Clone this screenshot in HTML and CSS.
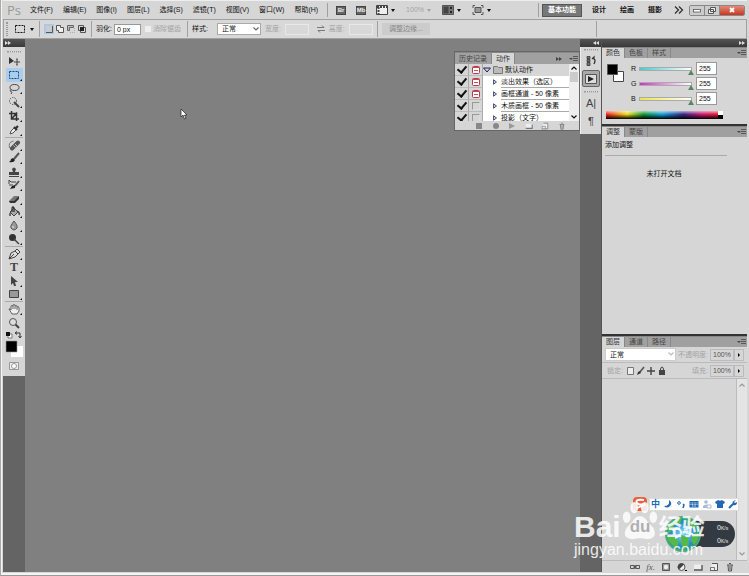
FILE: index.html
```html
<!DOCTYPE html>
<html lang="zh-CN">
<head>
<meta charset="utf-8">
<title>Ps</title>
<link rel="stylesheet" href="styles.css">
</head>
<body>
<svg class="defs" aria-hidden="true">
  <symbol id="down" viewBox="0 0 6 6"><path d="M1 2h4L3 5z" fill="currentColor"/></symbol>
  <symbol id="chev" viewBox="0 0 8 8"><path d="M1.500 2.500L4 5l2.500-2.500" fill="none" stroke="currentColor" stroke-width="1.200"/></symbol>
  <symbol id="ff" viewBox="0 0 8 6"><path d="M1 1l3 2-3 2zM4 1l3 2-3 2z" fill="currentColor"/></symbol>
  <symbol id="pmenu" viewBox="0 0 10 8"><path d="M0 3h4L2 5z" fill="currentColor"/><path d="M4 1.500h5M4 3.500h5M4 5.500h5" stroke="currentColor" stroke-width=".8"/></symbol>
  <symbol id="trash" viewBox="0 0 10 10"><path d="M2 3h6M4 1.500h2M3 3l.5 6h3L7 3M5 4v4" fill="none" stroke="currentColor"/></symbol>
  <symbol id="newdoc" viewBox="0 0 10 10"><path d="M3 1.500h5.500v7H1" fill="#eee" stroke="currentColor"/><path d="M1.500 5.500h4v3h-4z" fill="#eee" stroke="currentColor" stroke-width=".8"/></symbol>
  <symbol id="folder" viewBox="0 0 10 10"><path d="M1 2.500h8v5H1z" fill="#eee"/><path d="M1 8h8V3" fill="none" stroke="currentColor" stroke-width="1.400"/></symbol>
  <symbol id="red" viewBox="0 0 10 10"><rect x="1.500" y="1.500" width="7" height="7" rx="1" fill="#fff" stroke="#b63c48"/><path d="M2 2.500h6M3 5.500h4" stroke="#c64b57"/></symbol>
  <symbol id="marquee" viewBox="0 0 12 12"><rect x="1.500" y="2.500" width="9" height="7" fill="none" stroke="currentColor" stroke-dasharray="2 1"/></symbol>
</svg>

<div class="app">
  <header class="menubar">
    <span class="logo">Ps</span>
    <nav class="menus">
      <button>文件(F)</button><button>编辑(E)</button><button>图像(I)</button><button>图层(L)</button><button>选择(S)</button><button>滤镜(T)</button><button>视图(V)</button><button>窗口(W)</button><button>帮助(H)</button>
    </nav>
    <i class="rule"></i>
    <div class="apps">
      <button class="chip" aria-label="Bridge">Br</button>
      <button class="chip" aria-label="Mini Bridge">Mb</button>
      <button aria-label="查看额外内容"><svg class="i12" viewBox="0 0 12 12"><path d="M.5 1.500h11v9H.5z" fill="#eee" stroke="#444"/><path d="M1 3h10M2.500 3v7" stroke="#444" stroke-width="2" stroke-dasharray="2 1"/></svg><svg class="i6"><use href="#down"/></svg></button>
      <button class="dim">100%<svg class="i6"><use href="#down"/></svg></button>
      <button aria-label="排列文档"><svg class="i12" viewBox="0 0 12 12"><path d="M.5 1.500h11v9H.5z" fill="#777" stroke="#555"/><path d="M1.500 2.500h5v7h-5z" fill="#444"/><path d="M8 3h2v2H8zM8 7h2v2H8z" fill="#222"/></svg><svg class="i6"><use href="#down"/></svg></button>
      <button aria-label="屏幕模式"><svg class="i12" viewBox="0 0 12 12"><path d="M3 3.500h6v5H3z" fill="#999" stroke="#555"/><path d="M1 4V1.500h2M9 1.500h2V4M1 8v2.500h2M9 10.500h2V8" fill="none" stroke="#555"/></svg><svg class="i6"><use href="#down"/></svg></button>
    </div>
    <div class="modes">
      <i class="rule"></i>
      <button class="on">基本功能</button><button>设计</button><button>绘画</button><button>摄影</button>
      <button class="more" aria-label="更多"><svg class="i10" viewBox="0 0 10 10"><path d="M1 1.500L4.500 5 1 8.500M5 1.500L8.500 5 5 8.500" fill="none" stroke="#333" stroke-width="1.300"/></svg></button>
    </div>
    <div class="win">
      <button aria-label="最小化"><svg class="i10" viewBox="0 0 10 10"><rect x="1.500" y="4.500" width="7" height="2.500" fill="#fff" stroke="#555" stroke-width=".8"/></svg></button>
      <button aria-label="还原"><svg class="i10" viewBox="0 0 10 10"><path d="M3.500 2.500h5v4h-5zM1.500 4.500h5v4h-5z" fill="#eee" stroke="#555"/></svg></button>
      <button class="close" aria-label="关闭"><svg class="i10" viewBox="0 0 10 10"><path d="M3 3l4 4M7 3L3 7" stroke="#fff" stroke-width="1.800"/></svg></button>
    </div>
  </header>

  <div class="options">
    <i class="grip"></i>
    <button class="preset" aria-label="选框工具"><svg class="i12"><use href="#marquee"/></svg><svg class="i6"><use href="#down"/></svg></button>
    <i class="rule"></i>
    <div class="bools">
      <button class="sel" aria-label="新选区"><svg class="i10" viewBox="0 0 10 10"><path d="M2 2h6v6H2z" fill="#ccc"/><path d="M2 8.500h6.500V2" fill="none" stroke="#555"/></svg></button>
      <button aria-label="添加到选区"><svg class="i10" viewBox="0 0 10 10"><path d="M1.500 1.500h4v2h3v5h-5v-2h-2z" fill="#eee" stroke="#555"/></svg></button>
      <button aria-label="从选区减去"><svg class="i10" viewBox="0 0 10 10"><path d="M1.500 6.500v-5h6v2h-4v3z" fill="#bbb" stroke="#666"/><path d="M4 8.500h4.500V4" fill="none" stroke="#aaa" stroke-dasharray="1 1"/></svg></button>
      <button aria-label="与选区交叉"><svg class="i10" viewBox="0 0 10 10"><path d="M1.500 1.500h5v5h-5zM3.500 3.500h5v5h-5z" fill="none" stroke="#555"/><path d="M3 3h4v4H3z" fill="#222"/></svg></button>
    </div>
    <i class="rule"></i>
    <label for="feather">羽化:</label><input id="feather" class="num" value="0 px">
    <label class="tick dim"><input type="checkbox" disabled>消除锯齿</label>
    <i class="rule"></i>
    <label for="style">样式:</label>
    <span class="pick wide"><select id="style"><option>正常</option></select><svg class="i8"><use href="#chev"/></svg></span>
    <label class="dim" for="w">宽度:</label><input id="w" class="num off" disabled>
    <button class="swap" aria-label="互换"><svg class="i8" viewBox="0 0 8 8"><path d="M0 2.500h7M5 .5l2 2M8 5.500H1M3 7.500l-2-2" fill="none" stroke="#777"/></svg></button>
    <label class="dim" for="h">高度:</label><input id="h" class="num off" disabled>
    <i class="rule"></i>
    <button class="refine" disabled>调整边缘...</button>
    <i class="rule last"></i>
  </div>

  <main class="work">
    <aside class="tools">
      <div class="bar"><svg class="i8"><use href="#ff"/></svg></div>
      <div class="toolbox">
        <i class="handle"></i>
        <div class="grp g6">
          <button aria-label="移动"><svg viewBox="0 0 12 12"><path d="M1 2l5 4-5 3z" fill="#333"/><path d="M9 4v6M6 7h6" stroke="#444"/><path d="M9 3l1 1.500H8zM9 11l1-1.500H8z" fill="#444"/></svg></button>
          <button class="cur more-t" aria-label="矩形选框"><svg><use href="#marquee"/></svg></button>
          <button class="more-t" aria-label="套索"><svg viewBox="0 0 12 12"><ellipse cx="6.500" cy="4.500" rx="4.500" ry="3" fill="none" stroke="#444"/><path d="M3 6.500Q1 8 3 8.500t0 2.500" fill="none" stroke="#444"/></svg></button>
          <button class="more-t" aria-label="快速选择"><svg viewBox="0 0 12 12"><circle cx="5" cy="5" r="3.500" fill="none" stroke="#555" stroke-dasharray="1.500 1"/><path d="M6 6l5 5" stroke="#444" stroke-width="2"/></svg></button>
          <button class="more-t" aria-label="裁剪"><svg viewBox="0 0 12 12"><path d="M3.500 1v8H11M1 3.500h7.500V11M4 8.500l5-6" fill="none" stroke="#333" stroke-width="1.500"/></svg></button>
          <button class="more-t" aria-label="吸管"><svg viewBox="0 0 12 12"><path d="M2 10l1-3 3-3 2 2-3 3z" fill="#eee" stroke="#555"/><path d="M6 3l3 3M7 5l3-3" stroke="#333" stroke-width="2.200"/></svg></button>
        </div>
        <div class="grp g8">
          <button class="more-t" aria-label="修复画笔"><svg viewBox="0 0 12 12"><path d="M4 9.500L10 3.500" stroke="#555" stroke-width="4" stroke-linecap="round"/><path d="M5.500 6.500l2 2M7 5l2 2" stroke="#ddd" stroke-width=".8"/><path d="M1.500 9q-1.500-6 4-7" fill="none" stroke="#777"/></svg></button>
          <button class="more-t" aria-label="画笔"><svg viewBox="0 0 12 12"><path d="M11 1L6 7" stroke="#555" stroke-width="2"/><path d="M1 10q2-1 2-3l2-1 2 2q-1 3-6 2" fill="#222"/></svg></button>
          <button class="more-t" aria-label="图章"><svg viewBox="0 0 12 12"><path d="M4 3q2-3 4 0L7 6h4v3H1V6h4zM1 10h10v1H1z" fill="#444"/></svg></button>
          <button class="more-t" aria-label="历史画笔"><svg viewBox="0 0 12 12"><path d="M11 2L7 7" stroke="#555" stroke-width="2"/><path d="M2 10l2-3 3-1v3z" fill="#222"/><path d="M1 5V1l2 2h5M1 6h4" fill="none" stroke="#444"/></svg></button>
          <button class="more-t" aria-label="橡皮擦"><svg viewBox="0 0 12 12"><path d="M1 8l5-5h5L7 9H2z" fill="#777"/><path d="M1 8h5l5-5v3L7 10H2z" fill="#333"/></svg></button>
          <button class="more-t" aria-label="油漆桶"><svg viewBox="0 0 12 12"><path d="M2 6l4-4 4 4-4 4z" fill="#aaa" stroke="#444"/><path d="M4 6V2q1-2 2 0v4M2 7v3M9 5q3 1 2 4" fill="none" stroke="#333" stroke-width="1.300"/></svg></button>
          <button class="more-t" aria-label="模糊"><svg viewBox="0 0 12 12"><path d="M6 1Q2 6 3 8q3 4 6 0 1-2-3-7" fill="#999" stroke="#555"/><path d="M5 6v2" stroke="#eee"/></svg></button>
          <button class="more-t" aria-label="减淡"><svg viewBox="0 0 12 12"><circle cx="4.500" cy="4.500" r="3.500" fill="#333"/><path d="M6 6l5 5" stroke="#444" stroke-width="1.500"/></svg></button>
        </div>
        <div class="grp g4">
          <button class="more-t" aria-label="钢笔"><svg viewBox="0 0 12 12"><path d="M1 11l2-6 4-2 3 3-3 3zM7 3l2-2 3 3-2 2M1 11l5-5" fill="#ddd" stroke="#444"/></svg></button>
          <button class="more-t letter">T</button>
          <button class="more-t" aria-label="路径选择"><svg viewBox="0 0 12 12"><path d="M3 1l7 6H7l1 4H6L5 8l-2 2z" fill="#444"/></svg></button>
          <button class="more-t" aria-label="矩形"><svg viewBox="0 0 12 12"><path d="M1.500 2.500h9v7h-9z" fill="#999" stroke="#444"/></svg></button>
        </div>
        <div class="grp g2">
          <button class="more-t" aria-label="抓手"><svg viewBox="0 0 12 12"><path d="M4 11L1 6q1-1 2 1V3q1-1 2 0V2q1-1 2 0v1q1-1 2 0v1q2-1 2 1v3l-2 3zM5 3v3M7 3v3M9 4v3" fill="#eee" stroke="#555" stroke-width=".9"/></svg></button>
          <button aria-label="缩放"><svg viewBox="0 0 12 12"><circle cx="5" cy="5" r="3.500" fill="#ddd" stroke="#555"/><path d="M7.500 7.500L11 11" stroke="#444" stroke-width="2"/></svg></button>
        </div>
        <svg class="inks" viewBox="0 0 18 46"><path d="M3 4h4v4H3z" fill="#fff" stroke="#777"/><path d="M1 2h4v4H1z" fill="#111"/><path d="M11 3h4v4M12 1.500L10 3l2 1.500M13.500 6L15 8l1.500-2" fill="none" stroke="#333"/><path d="M6 16h12v11H6z" fill="#fff"/><path d="M1 11h11v11H1z" fill="#000" stroke="#999" stroke-width=".6"/><path d="M4.500 32.500h9v7h-9z" fill="#eee" stroke="#999"/><circle cx="9" cy="36" r="2.500" fill="#fff" stroke="#999"/></svg>
      </div>
    </aside>

    <section class="canvas"></section>

    <aside class="strip">
      <div class="bar right"><svg class="i8 flip"><use href="#ff"/></svg></div>
      <div class="stripbox">
        <i class="handle"></i>
        <button aria-label="历史记录"><svg class="i12" viewBox="0 0 12 12"><path d="M2 1.500h3v2H2zM2 4.500h3v2H2zM2 7.500h3v3H2z" fill="#777" stroke="#333" stroke-width=".8"/><path d="M7 4l2-2v2q2 1 0 5" fill="none" stroke="#333" stroke-width="1.300"/></svg></button>
        <button class="down" aria-label="动作"><svg class="i12" viewBox="0 0 12 12"><path d="M.5 1.500h11v9H.5z" fill="#ddd" stroke="#555"/><path d="M3 3l6 3-6 3z" fill="#222"/></svg></button>
        <i class="handle"></i>
        <button class="glyph">A|</button>
        <button class="glyph">¶</button>
      </div>
    </aside>

    <aside class="panels">
      <div class="bar both"><span></span><svg class="i8"><use href="#ff"/></svg></div>
      <section class="panel">
        <div class="tabs"><button class="act">颜色</button><button>色板</button><button>样式</button><svg class="i10 pm"><use href="#pmenu"/></svg></div>
        <div class="color">
          <svg class="fgbg" viewBox="0 0 20 20"><path d="M7.500 8.500h10v10h-10z" fill="#fff" stroke="#444"/><path d="M1.500 1.500h10v10h-10z" fill="#000" stroke="#555"/></svg>
          <div class="chans">
            <label for="r">R</label><span class="ramp cyan"><i></i></span><input id="r" value="255">
            <label for="g">G</label><span class="ramp mag"><i></i></span><input id="g" value="255">
            <label for="b">B</label><span class="ramp yel"><i></i></span><input id="b" value="255">
          </div>
          <div class="spectrum"><span></span><i></i></div>
        </div>
      </section>
      <section class="panel">
        <div class="tabs"><button class="act">调整</button><button>蒙版</button><svg class="i10 pm"><use href="#pmenu"/></svg></div>
        <div class="adjust"><h2>添加调整</h2><p>未打开文档</p></div>
      </section>
      <section class="panel grow">
        <div class="tabs"><button class="act">图层</button><button>通道</button><button>路径</button><svg class="i10 pm"><use href="#pmenu"/></svg></div>
        <div class="lrow">
          <span class="pick blend"><select aria-label="混合模式"><option>正常</option></select><svg class="i8"><use href="#chev"/></svg></span>
          <label class="dim push" for="op">不透明度:</label><input id="op" class="pct" value="100%"><button class="step" aria-label="不透明度滑块"><svg class="i6" viewBox="0 0 6 6"><path d="M2 1l2 2-2 2z"/></svg></button>
        </div>
        <div class="lrow">
          <span class="dim">锁定:</span>
          <svg class="locks" viewBox="0 0 42 10"><path d="M1.500 1.500h6v7h-6z" fill="#eee" stroke="#777"/><path d="M18 1l-4 5" stroke="#555" stroke-width="1.600"/><path d="M11 9l1-3 2-1 1 2z" fill="#333"/><path d="M25 1v8M21 5h8" stroke="#444" stroke-width="1.400"/><path d="M33 4h6v5h-6z" fill="#444"/><path d="M34.500 4q0-3 1.500-3t1.500 3" fill="none" stroke="#444"/></svg>
          <label class="dim push" for="fill">填充:</label><input id="fill" class="pct" value="100%"><button class="step" aria-label="填充滑块"><svg class="i6" viewBox="0 0 6 6"><path d="M2 1l2 2-2 2z"/></svg></button>
        </div>
        <div class="layers"><div class="scroll"><svg class="i8 up"><use href="#chev"/></svg><svg class="i8"><use href="#chev"/></svg></div></div>
        <div class="lfoot">
          <svg class="i10" viewBox="0 0 10 10"><path d="M.5 3.500h4v3h-4zM5.500 3.500h4v3h-4zM3 5h4" fill="none" stroke="#555"/></svg>
          <em>fx.</em>
          <svg class="i10" viewBox="0 0 10 10"><path d="M1.500 1.500h7v7h-7z" fill="#999" stroke="#555"/><circle cx="5" cy="5" r="2.200" fill="#eee"/></svg>
          <svg class="i10" viewBox="0 0 10 10"><circle cx="4.500" cy="5" r="3.500" fill="#eee" stroke="#555"/><path d="M2 7.500L7 2.500A3.500 3.500 0 0 0 2 7.500" fill="#444"/><path d="M8 8h2v1H8z"/></svg>
          <svg class="i10"><use href="#folder"/></svg>
          <svg class="i10"><use href="#newdoc"/></svg>
          <svg class="i10"><use href="#trash"/></svg>
        </div>
      </section>
    </aside>
  </main>
</div>

<section class="actions">
  <div class="tabs"><button>历史记录</button><button class="act">动作</button><svg class="i8 pm"><use href="#ff"/></svg><svg class="i10 am"><use href="#pmenu"/></svg></div>
  <div class="abody">
    <ul>
      <li class="set"><input type="checkbox" checked aria-label="默认动作"><span class="dlg"><svg class="i10"><use href="#red"/></svg></span><span class="nm"><svg class="i8" viewBox="0 0 8 8"><path d="M.5 2h7L4 6z" fill="#ccd" stroke="#225"/></svg><svg class="i10" viewBox="0 0 10 10"><path d="M.5 1.500h4l1 1h4v6h-9z" fill="#bbb" stroke="#777"/></svg>默认动作</span></li>
      <li><input type="checkbox" checked aria-label="淡出效果"><span class="dlg"><svg class="i10"><use href="#red"/></svg></span><span class="nm"><svg class="i6" viewBox="0 0 6 8"><path d="M1 1l4 3-4 3z" fill="#ccd" stroke="#225"/></svg><b>淡出效果（选区）</b></span></li>
      <li><input type="checkbox" checked aria-label="画框通道"><span class="dlg"><svg class="i10"><use href="#red"/></svg></span><span class="nm"><svg class="i6" viewBox="0 0 6 8"><path d="M1 1l4 3-4 3z" fill="#ccd" stroke="#225"/></svg><b>画框通道 - 50 像素</b></span></li>
      <li><input type="checkbox" checked aria-label="木质画框"><span class="dlg"><i></i></span><span class="nm"><svg class="i6" viewBox="0 0 6 8"><path d="M1 1l4 3-4 3z" fill="#ccd" stroke="#225"/></svg><b>木质画框 - 50 像素</b></span></li>
      <li><input type="checkbox" checked aria-label="投影"><span class="dlg"><i></i></span><span class="nm"><svg class="i6" viewBox="0 0 6 8"><path d="M1 1l4 3-4 3z" fill="#ccd" stroke="#225"/></svg><b>投影（文字）</b></span></li>
    </ul>
    <div class="scroll"><svg class="i8 up"><use href="#chev"/></svg><i></i><svg class="i8 end"><use href="#chev"/></svg></div>
  </div>
  <div class="afoot">
    <svg class="i8" viewBox="0 0 8 8"><path d="M1 1h6v6H1z" fill="#888"/></svg>
    <svg class="i8" viewBox="0 0 8 8"><circle cx="4" cy="4" r="3" fill="#888"/></svg>
    <svg class="i8" viewBox="0 0 8 8"><path d="M1 1l6 3-6 3z" fill="#999"/></svg>
    <svg class="i8"><use href="#folder"/></svg>
    <svg class="i8"><use href="#newdoc"/></svg>
    <svg class="i8"><use href="#trash"/></svg>
  </div>
</section>

<svg class="cursor" viewBox="0 0 8 12"><path d="M1 1v8l2-2 1.500 4 1.500-.6L4.500 7H7z" fill="#fff" stroke="#222" stroke-width=".7"/></svg>

<div class="net">
  <div class="pill"><span>0<small>K/s</small></span><span>0<small>K/s</small></span></div>
  <svg class="globe" viewBox="0 0 38 38"><defs><radialGradient id="gl"><stop offset="0" stop-color="#8bdcf5"/><stop offset=".7" stop-color="#278bd0"/><stop offset="1" stop-color="#2c9a84"/></radialGradient></defs><circle cx="19" cy="19" r="17" fill="url(#gl)" stroke="#48aa7b" stroke-width="2"/><path d="M5 10q7-8 13-7l-2 5-6 2-1 5-5 4zM20 4l8 2 5 6-5 1-4-3zM3 22l7-1 5 5-2 7q-8-4-10-11M17 20l7 2 1 8-5 5-3-6zM28 19l6-2q2 7-4 13l-3-4z" fill="#57b84a"/><path d="M9 16q3-5 7-1t-5 8M20 15l8-3M22 18l7 1" stroke="#d9f7ff" stroke-width="2" fill="none"/></svg>
</div>
<div class="ime">
  <svg class="sogou" viewBox="0 0 16 16"><rect x="1" y="1" width="14" height="14" rx="4" fill="#e9603c"/><path d="M12 4Q4 3 4.500 6T11 8.500 4 12" fill="none" stroke="#fff" stroke-width="2"/></svg>
  <div class="imebar">
    <span>中</span>
    <svg class="i10" viewBox="0 0 10 10"><path d="M6 1q4 3 1 6-3 3-6 0 6 0 5-6" fill="#2368b5"/></svg>
    <svg class="i10" viewBox="0 0 10 10"><circle cx="3" cy="4" r="1.300" fill="none" stroke="#2368b5"/><path d="M7 5l1 1-1 3" fill="none" stroke="#2368b5" stroke-width="1.500"/></svg>
    <svg class="i10" viewBox="0 0 10 10"><path d="M.5 2h9v6.500h-9z" fill="#2368b5"/><path d="M1.500 4h7M1.500 5.500h7M3 7h4" stroke="#fff" stroke-width=".8" stroke-dasharray="1 .6"/></svg>
    <svg class="i10" viewBox="0 0 10 10"><circle cx="4" cy="3" r="1.800" fill="#a9b9d8"/><path d="M1 9V7q3-3 6 0v2z" fill="#a9b9d8"/><path d="M5 6h4v3H5z" fill="#fff" stroke="#a9b9d8"/></svg>
    <svg class="i10" viewBox="0 0 10 10"><path d="M0 3l3-2q2 1 4 0l3 2-1 2-1-.5V9H2V4.500L1 5z" fill="#2368b5"/></svg>
    <svg class="i10" viewBox="0 0 10 10"><path d="M1 9l4-4" stroke="#2368b5" stroke-width="2"/><path d="M8 1L6 3l1 1 2-1q0 4-4 3-2-4 3-5" fill="#2368b5"/></svg>
  </div>
</div>
<div class="mark">
  <div class="mtop"><span>Bai</span><span class="paw"><svg viewBox="0 0 38 44"><ellipse cx="5" cy="18" rx="4" ry="6"/><ellipse cx="13" cy="8" rx="4" ry="6"/><ellipse cx="24" cy="8" rx="4" ry="6"/><ellipse cx="33" cy="18" rx="4" ry="6"/><path d="M19 17q5 0 8 6l6 6q5 11-6 12-8-2-16 0Q-1 40 5 29l6-6q3-6 8-6"/></svg><b>du</b></span><span class="jy">经验</span></div>
  <div class="url">jingyan.baidu.com</div>
</div>
</body>
</html>
```
FILE: styles.css
```css
* { box-sizing: border-box; }
body { margin: 0; font: 7px/10px "Liberation Sans", "Noto Sans CJK SC", sans-serif; color: #111; background: #d6d6d6; }
button, input, select { font: inherit; color: inherit; border: 0; padding: 0; margin: 0; background: none; border-radius: 0; }
button { display: flex; align-items: center; justify-content: center; white-space: nowrap; }
ul, h2, p { margin: 0; padding: 0; list-style: none; font-size: inherit; }
svg { display: block; flex: none; }
label { white-space: nowrap; }
.defs { position: absolute; width: 0; height: 0; }
.i6 { width: 6px; height: 6px; }
.i8 { width: 8px; height: 8px; }
.i10 { width: 10px; height: 10px; }
.i12 { width: 12px; height: 12px; }
.dim { color: #a4a4a4; }
.flip { transform: scaleX(-1); }
.up { transform: scaleY(-1); }
.rule { width: 1px; height: 14px; background: #a0a0a0; flex: none; }

.app { min-height: 100vh; display: flex; flex-direction: column; padding: 0 2px 3px; border-bottom: 1px solid #999; border-left: 1px solid #aaa; box-shadow: inset 1px -2px #f4f4f4; }
.menubar { height: 19px; display: flex; align-items: center; border-top: 1px solid #eee; }
.logo { font: 13px/16px "Open Sans", sans-serif; color: #999; width: 22px; padding-left: 4px; }
.menus { display: flex; margin-right: 4px; }
.menus button { padding: 0 5px; }
.apps { display: flex; align-items: center; gap: 10px; margin-left: 8px; }
.apps button { gap: 2px; }
.apps .chip { width: 10px; height: 9px; background: #666; color: #eee; font-weight: bold; font-size: 6px; border: 1px solid #444; }
.modes { display: flex; align-items: center; margin-left: auto; font-weight: bold; }
.modes button { padding: 0 7px; }
.modes .on { color: #fff; background: #777; border: 1px solid #555; height: 13px; padding: 0 5px; margin: 0 3px; }
.modes .more { padding: 0 5px; }
.win { display: flex; border: 1px solid #888; border-radius: 2px; height: 11px; overflow: hidden; margin-right: 2px; }
.win button { width: 15px; background: #ccc; border-right: 1px solid #888; }
.win .close { width: 24px; background: linear-gradient(#e38a78, #c53722); border: 0; }

.options { height: 20px; display: flex; align-items: center; gap: 4px; border: 1px solid #a0a0a0; background: #d8d8d8; padding-left: 2px; }
.grip { width: 2px; height: 14px; border-left: 1px dotted #999; border-right: 1px dotted #999; margin-right: 2px; }
.preset { gap: 3px; }
.options .rule { height: 16px; }
.bools { display: flex; gap: 1px; }
.bools .sel { background: #a9c9e6; }
.num { width: 27px; height: 11px; background: #fff; border: 1px solid #999; padding: 0 2px; margin-left: -2px; }
.off { width: 24px; background: #d8d8d8; border-color: #e8e8e8; margin: 0; }
.swap { padding-left: 4px; }
.tick { display: flex; align-items: center; gap: 2px; margin-right: 2px; }
.tick input { appearance: none; width: 6px; height: 6px; background: #eee; }
.pick { position: relative; display: block; color: #222; }
.pick select { appearance: none; width: 100%; height: 12px; background: #fff; border: 1px solid #aaa; padding: 0 4px; display: block; }
.pick svg { position: absolute; right: 1px; top: 2px; color: #666; }
.wide { width: 44px; margin-left: 5px; }
.refine { height: 12px; width: 48px; background: #ccc; color: #888; }
.options .last { margin-left: auto; margin-right: 149px; }

.work { flex: 1; display: flex; min-height: 0; background: #808080; }
.bar { height: 8px; background: linear-gradient(#555, #393939); color: #ddd; display: flex; align-items: center; padding: 0 1px; }
.bar.right { justify-content: flex-end; }
.bar.both { justify-content: space-between; }
.tools { width: 22px; background: #646464; }
.toolbox { background: #d6d6d6; padding: 3px 2px 0; }
.handle { display: block; height: 2px; margin: 1px 2px; border-top: 1px dotted #999; border-bottom: 1px dotted #bbb; }
.grp { display: grid; grid-auto-rows: 1fr; border-bottom: 1px solid #aaa; padding-left: 1px; }
.g6 { height: 84px; }
.g8 { height: 109px; }
.g4 { height: 55px; }
.g2 { height: 28px; border: 0; }
.grp button { position: relative; color: #333; padding-right: 1px; }
.grp svg { width: 12px; height: 12px; }
.grp .cur { background: #a9cdec; color: #247; }
.more-t::after { content: ""; position: absolute; right: 1px; bottom: 1px; border: 1px solid; border-color: transparent #111 #111 transparent; }
.grp .letter { font: bold 12px/12px "Liberation Serif", serif; color: #444; }
.inks { width: 18px; height: 46px; }
.canvas { flex: 1; }

.strip { width: 21px; background: #646464; }
.stripbox { background: #d6d6d6; padding: 1px 1px 4px; border-left: 1px solid #eee; }
.stripbox button { width: 18px; height: 17px; }
.stripbox .down { background: #aaa; border: 1px solid #666; border-radius: 2px; margin: 1px 0 4px; }
.stripbox .glyph { font-size: 11px; color: #444; height: 18px; }

.panels { width: 146px; display: flex; flex-direction: column; background: #d6d6d6; border-left: 1px solid #555; }
.panel { border-bottom: 2px solid #333; display: flex; flex-direction: column; }
.panel.grow { flex: 1; border: 0; }
.tabs { display: flex; height: 11px; background: #a0a0a0; border-top: 1px solid #888; align-items: stretch; flex: none; color: #444; }
.tabs button { padding: 0 4px; border-right: 1px solid #888; }
.tabs .act { background: #d6d6d6; color: #333; }
.pm { margin-left: auto; }
.color { display: grid; grid-template-columns: 20px 1fr; column-gap: 4px; row-gap: 4px; padding: 3px 4px 5px; height: 66px; }
.fgbg { width: 20px; height: 20px; margin-top: 2px; }
.chans { display: grid; grid-template-columns: 6px 1fr 21px; grid-auto-rows: 15px; align-items: center; padding-right: 26px; margin-left: 1px; }
.chans input { height: 13px; background: #fff; border: 1px solid #999; width: 21px; padding: 0 2px; }
.ramp { position: relative; height: 4px; border: 1px solid #aaa; margin: 0 4px 0 2px; }
.ramp i { position: absolute; right: -3px; top: 2px; border: 3px solid transparent; border-top: 0; border-bottom: 5px solid #598565; }
.cyan { background: linear-gradient(90deg, #44cccc, #fff); }
.mag { background: linear-gradient(90deg, #cc33cc, #fff); }
.yel { background: linear-gradient(90deg, #eee34a, #fff); }
.spectrum { grid-column: 1 / 3; display: flex; height: 8px; margin-right: 20px; background: linear-gradient(#ffffff99, transparent 40%, #000), linear-gradient(90deg, #e22, #f5e020 18%, #169a35 32%, #18a4dd 48%, #352b8a 66%, #d01b75 82%, #e22); }
.spectrum span { flex: 1; }
.spectrum i { width: 5px; background: linear-gradient(#fff 50%, #000 50%); }
.adjust { height: 197px; padding: 3px 20px 0 3px; }
.adjust h2 { font-weight: normal; padding-bottom: 5px; border-bottom: 1px solid #aaa; }
.adjust p { text-align: center; padding: 13px 4px 0 0; }
.lrow { display: flex; align-items: center; height: 16px; padding: 0 3px; border-bottom: 1px solid #bbb; flex: none; }
.blend { width: 71px; }
.lrow .pick select { border-color: #ccc; height: 13px; }
.lrow .pick svg { color: #bbb; }
.lrow .dim { margin: 0 2px; }
.lrow .push { margin-left: auto; }
.pct { width: 24px; height: 12px; border: 1px solid #bbb; padding: 0 2px; color: #555; }
.step { width: 10px; height: 12px; border: 1px solid #bbb; }
.locks { width: 42px; height: 10px; margin-left: 1px; }
.layers { flex: 1; display: flex; justify-content: flex-end; }
.layers .scroll { width: 11px; border-left: 1px solid #bbb; background: #e4e4e4; color: #999; display: flex; flex-direction: column; justify-content: space-between; padding: 2px 1px; }
.lfoot { height: 12px; display: flex; align-items: center; justify-content: flex-end; gap: 6px; padding-right: 12px; border-top: 1px solid #bbb; color: #555; }
.lfoot em { font: italic 9px/10px "Liberation Serif", serif; }

.actions { position: absolute; left: 454px; top: 51px; width: 126px; background: #d6d6d6; border: 1px solid #666; }
.actions .tabs { height: 12px; align-items: center; }
.actions .tabs button { height: 11px; }
.am { margin-left: 6px; }
.abody { display: flex; height: 57px; overflow: hidden; }
.abody ul { flex: 1; background: #fff; }
.abody li { display: flex; height: 12px; align-items: center; }
.abody li input { appearance: none; width: 14px; height: 12px; background: #d6d6d6; border-right: 1px solid #aaa; border-bottom: 1px solid #bbb; display: grid; place-items: center; padding-bottom: 2px; }
.abody li input:checked::after { content: ""; width: 4px; height: 7px; border: solid #111; border-width: 0 2px 2px 0; transform: rotate(40deg); }
.dlg { width: 14px; height: 12px; display: grid; place-items: center; background: #d6d6d6; border-right: 1px solid #aaa; border-bottom: 1px solid #bbb; }
.dlg i { width: 8px; height: 8px; border: 1px solid #aaa; border-color: #999 #ddd #ddd #999; }
.nm { display: flex; flex: 1; align-items: center; gap: 2px; height: 12px; padding-left: 9px; white-space: nowrap; }
.set .nm { background: #d6d6d6; padding-left: 0; gap: 2px; }
.nm b { font-weight: normal; flex: 1; border-bottom: 1px solid #aaa; line-height: 11px; margin-left: 1px; }
.abody .scroll { width: 10px; background: #eee; display: flex; flex-direction: column; align-items: center; }
.abody .scroll i { width: 8px; height: 10px; background: #ccc; }
.abody .end { margin-top: auto; }
.afoot { height: 9px; display: flex; align-items: center; justify-content: space-between; padding: 0 13px 0 20px; color: #777; }

.cursor { position: absolute; left: 180px; top: 108px; width: 8px; height: 12px; }
.net { position: absolute; right: 14px; bottom: 23px; width: 71px; height: 38px; }
.pill { position: absolute; right: 0; top: 6px; width: 50px; height: 26px; border-radius: 0 13px 13px 0; background: #343a42; color: #eee; display: flex; flex-direction: column; justify-content: space-around; padding-left: 32px; }
.pill small { font-size: 5px; }
.globe { position: absolute; left: 0; top: 0; width: 38px; height: 38px; }
.ime { position: absolute; right: 10px; bottom: 64px; display: flex; align-items: center; gap: 1px; }
.sogou { width: 16px; height: 16px; }
.imebar { display: flex; align-items: center; gap: 3px; width: 90px; height: 13px; background: #fff; border: 1px solid #ddd; color: #2368b5; padding: 0 1px; }
.imebar span { font: bold 9px/10px "Noto Sans CJK SC", sans-serif; }
.mark { position: absolute; left: 574px; top: 501px; color: #fff; opacity: .85; }
.mtop { display: flex; align-items: flex-end; height: 41px; font: bold 30px/30px "Liberation Sans", sans-serif; }
.paw { position: relative; }
.paw svg { width: 38px; height: 42px; fill: #fff; }
.paw b { position: absolute; left: 9px; top: 18px; font: bold 17px/18px "Liberation Sans", sans-serif; color: #aaa; }
.jy { font: bold 23px/34px "Noto Sans CJK SC", sans-serif; }
.url { font: 16px/16px "Liberation Sans", sans-serif; }
```
